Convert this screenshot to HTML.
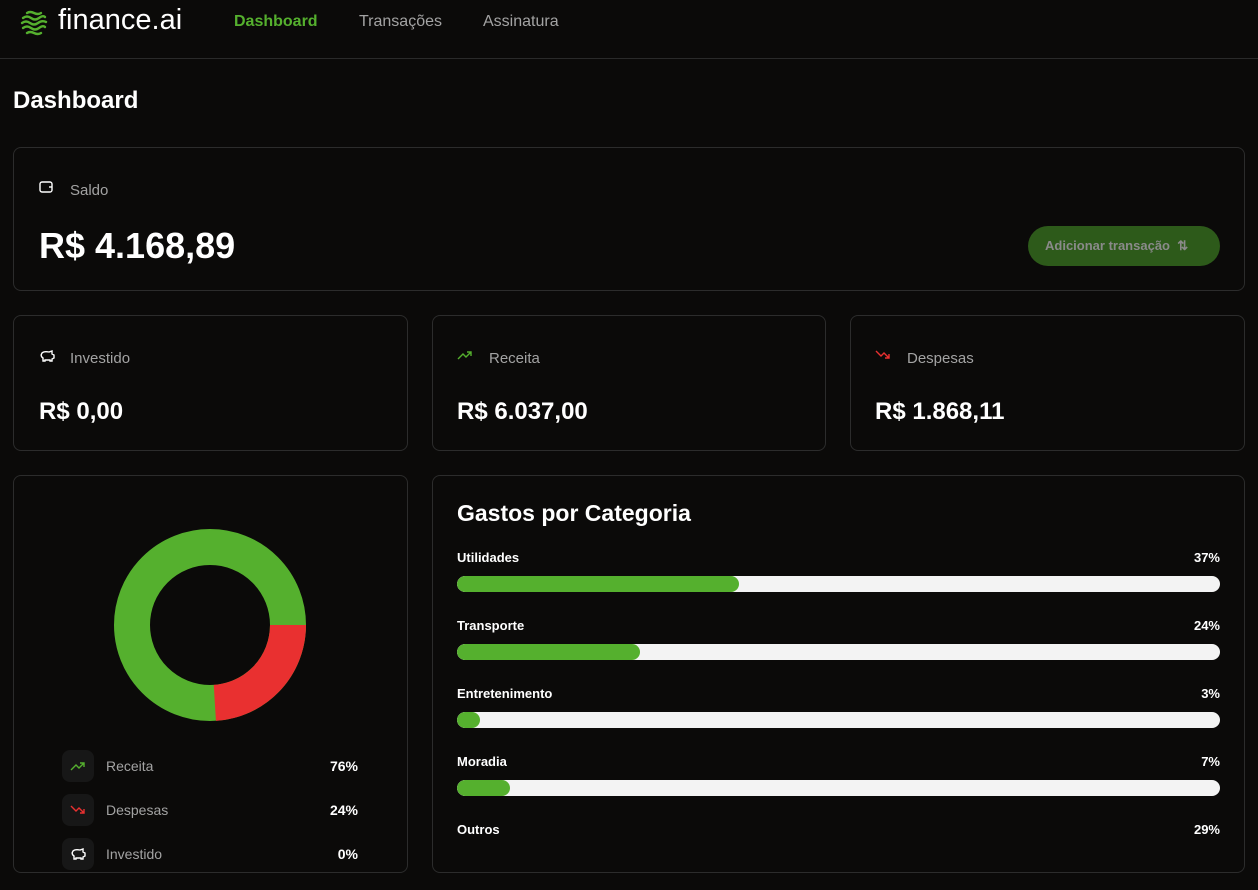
<!DOCTYPE html>
<html><head><meta charset="utf-8"><style>
*{box-sizing:border-box;margin:0;padding:0}
body{width:1258px;height:890px;background:#0b0a09;color:#fff;font-family:"Liberation Sans",sans-serif;position:relative;overflow:hidden}
.nav{height:59px;border-bottom:1px solid #2a2a2a;position:relative}
.abs{position:absolute}
.card{position:absolute;border:1px solid #2c2c2c;border-radius:8px}
.lbl{color:#a3a3a3;font-size:15px}
.val{font-weight:bold;font-size:24px}
.ib{position:absolute;left:62px;width:32px;height:32px;border-radius:8px;background:#171717}
.bar{position:absolute;left:457px;width:763px;height:16px;border-radius:8px;background:#f3f3f3;overflow:hidden}
.bar div{height:100%;background:#55b02e;border-radius:8px}
.cn{position:absolute;left:457px;font-size:13px;font-weight:bold}
.cp{position:absolute;right:38px;font-size:13px;font-weight:bold}
</style></head><body>
<div class="nav">
<svg class="abs" style="left:20px;top:8px" width="28" height="28" viewBox="0 0 28 28"><g fill="none" stroke="#55b02e" stroke-width="2.4" stroke-linecap="round"><path d="M7 5q3-2 7 0t7 0"/><path d="M3 10q4-3 8 0t8 0t6-1"/><path d="M2 15q4-3 8 0t8 0t8-1"/><path d="M3 20q4-3 8 0t8 0t6-1"/><path d="M7 25q3-2 7 0t7 0"/></g></svg>
<div class="abs" style="left:58px;top:4px;font-size:29px;">finance.ai</div>
<div class="abs" style="left:234px;top:13px;font-size:16px;font-weight:bold;color:#55b02e">Dashboard</div>
<div class="abs" style="left:359px;top:13px;font-size:16px;color:#a3a3a3">Transações</div>
<div class="abs" style="left:483px;top:13px;font-size:16px;color:#a3a3a3">Assinatura</div>
</div>
<div class="abs" style="left:13px;top:87px;font-size:24px;font-weight:bold">Dashboard</div>

<div class="card" style="left:13px;top:147px;width:1232px;height:144px">
<svg class="abs" style="left:25px;top:32px" width="15" height="14" viewBox="0 0 15 14" fill="none" stroke="#fff" stroke-width="1.4"><rect x="1" y="2" width="12" height="10" rx="2"/><path d="M10 7h3"/></svg>
<div class="abs lbl" style="left:56px;top:34px">Saldo</div>
<div class="abs" style="left:25px;top:77px;font-size:36px;font-weight:bold">R$ 4.168,89</div>
<div class="abs" style="left:1014px;top:78px;width:192px;height:40px;border-radius:20px;background:#2d5a1a;color:#8a8a8a;font-size:13px;font-weight:bold;line-height:40px;padding-left:17px">Adicionar transação &nbsp;⇅</div>
</div>

<div class="card" style="left:13px;top:315px;width:395px;height:136px">
<svg class="abs" style="left:25px;top:33px" width="16" height="14" viewBox="0 0 16 14" fill="none" stroke="#fff" stroke-width="1.4"><path d="M3 4q2-2 7-1l3-1v3l2 1v3l-2 1v2h-2v-1H6v1H4V9Q1 7 3 4z"/></svg>
<div class="abs lbl" style="left:56px;top:34px">Investido</div>
<div class="abs val" style="left:25px;top:82px">R$ 0,00</div></div>
<div class="card" style="left:432px;top:315px;width:394px;height:136px">
<svg class="abs" style="left:24px;top:33px" width="16" height="12" viewBox="0 0 16 12" fill="none" stroke="#55b02e" stroke-width="1.4"><path d="M1 10l5-5 3 3 5-5M10 3h4v4"/></svg>
<div class="abs lbl" style="left:56px;top:34px">Receita</div>
<div class="abs val" style="left:24px;top:82px">R$ 6.037,00</div></div>
<div class="card" style="left:850px;top:315px;width:395px;height:136px">
<svg class="abs" style="left:24px;top:33px" width="16" height="12" viewBox="0 0 16 12" fill="none" stroke="#e93030" stroke-width="1.4"><path d="M1 2l5 5 3-3 5 5M10 9h4V5"/></svg>
<div class="abs lbl" style="left:56px;top:34px">Despesas</div>
<div class="abs val" style="left:24px;top:82px">R$ 1.868,11</div></div>

<div class="card" style="left:13px;top:475px;width:395px;height:398px">
<svg class="abs" style="left:100px;top:53px" width="192" height="192" viewBox="0 0 192 192"><circle cx="96" cy="96" r="78" fill="none" stroke="#55b02e" stroke-width="36"/><circle cx="96" cy="96" r="78" fill="none" stroke="#e93030" stroke-width="36" stroke-dasharray="117.6 400"/></svg>
</div>
<div class="ib" style="top:750px"><svg style="margin:10px 8px" width="16" height="12" viewBox="0 0 16 12" fill="none" stroke="#55b02e" stroke-width="1.4"><path d="M1 10l5-5 3 3 5-5M10 3h4v4"/></svg></div>
<div class="ib" style="top:794px"><svg style="margin:10px 8px" width="16" height="12" viewBox="0 0 16 12" fill="none" stroke="#e93030" stroke-width="1.4"><path d="M1 2l5 5 3-3 5 5M10 9h4V5"/></svg></div>
<div class="ib" style="top:838px"><svg style="margin:9px 8px" width="16" height="14" viewBox="0 0 16 14" fill="none" stroke="#fff" stroke-width="1.4"><path d="M3 4q2-2 7-1l3-1v3l2 1v3l-2 1v2h-2v-1H6v1H4V9Q1 7 3 4z"/></svg></div>
<div class="abs lbl" style="left:106px;top:758px;font-size:14px">Receita</div>
<div class="abs lbl" style="left:106px;top:802px;font-size:14px">Despesas</div>
<div class="abs lbl" style="left:106px;top:846px;font-size:14px">Investido</div>
<div class="abs" style="right:900px;top:758px;font-size:14px;font-weight:bold">76%</div>
<div class="abs" style="right:900px;top:802px;font-size:14px;font-weight:bold">24%</div>
<div class="abs" style="right:900px;top:846px;font-size:14px;font-weight:bold">0%</div>

<div class="card" style="left:432px;top:475px;width:813px;height:398px"></div>
<div class="abs" style="left:457px;top:500px;font-size:23px;font-weight:bold">Gastos por Categoria</div>
<div class="cn" style="top:550px">Utilidades</div><div class="cp" style="top:550px">37%</div>
<div class="bar" style="top:576px"><div style="width:282px"></div></div>
<div class="cn" style="top:618px">Transporte</div><div class="cp" style="top:618px">24%</div>
<div class="bar" style="top:644px"><div style="width:183px"></div></div>
<div class="cn" style="top:686px">Entretenimento</div><div class="cp" style="top:686px">3%</div>
<div class="bar" style="top:712px"><div style="width:23px"></div></div>
<div class="cn" style="top:754px">Moradia</div><div class="cp" style="top:754px">7%</div>
<div class="bar" style="top:780px"><div style="width:53px"></div></div>
<div class="cn" style="top:822px">Outros</div><div class="cp" style="top:822px">29%</div>
</body></html>
